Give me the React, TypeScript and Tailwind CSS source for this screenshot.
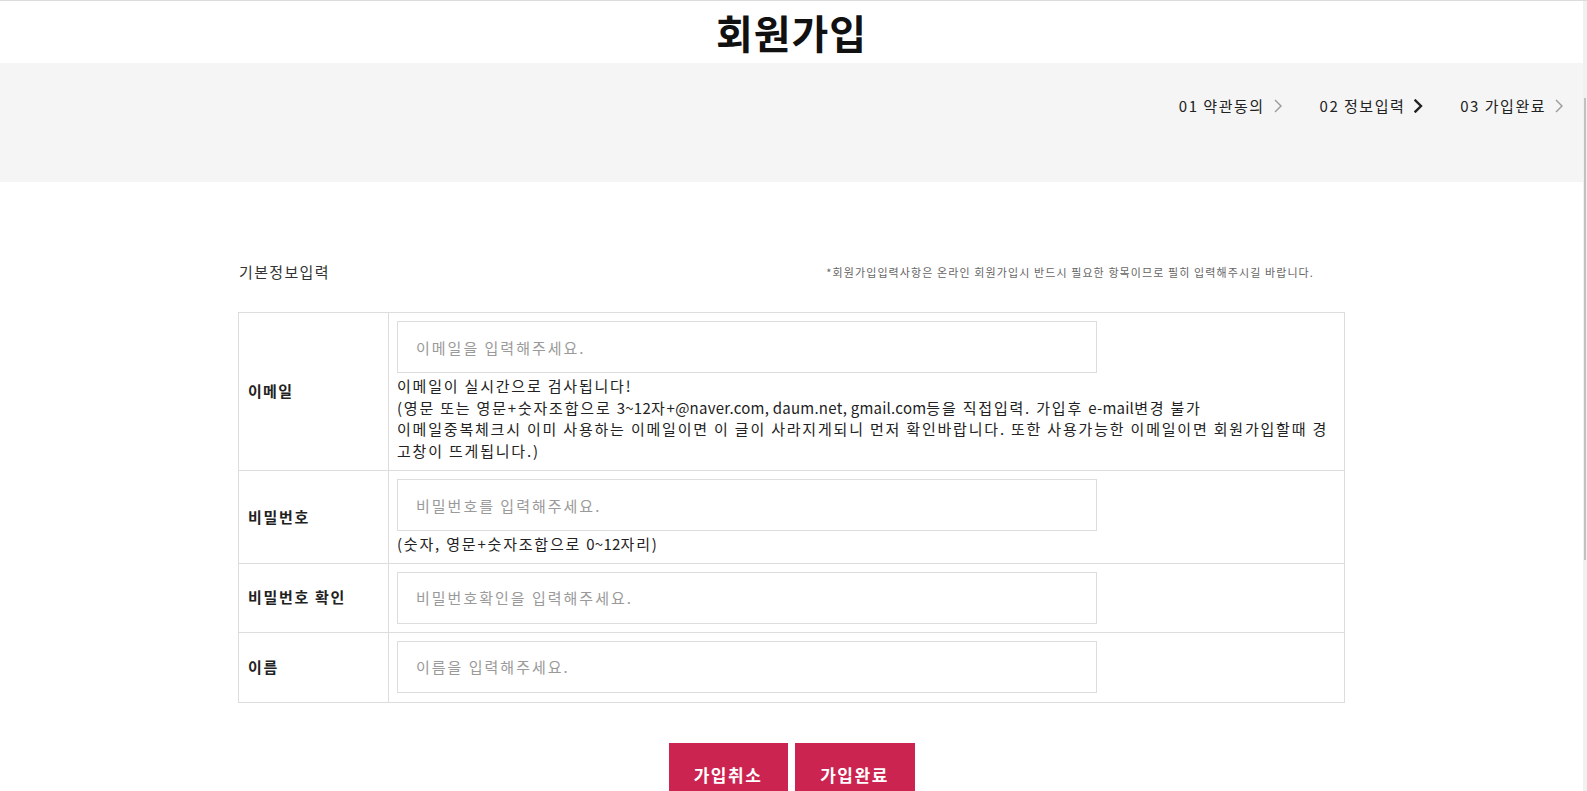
import React from "react";

const FONT = { fontFamily: '"Noto Sans CJK KR", "Noto Sans", sans-serif' };

function L({ children }: { children: React.ReactNode }) {
  return <span className="tracking-[0.25px]">{children}</span>;
}

function Chevron({ dark }: { dark?: boolean }) {
  return (
    <svg width="9" height="14" viewBox="0 0 9 14" className="ml-[9px]">
      <polyline
        points="1.5,1.5 7,7 1.5,12.5"
        fill="none"
        stroke={dark ? "#222" : "#9a9a9a"}
        strokeWidth={dark ? 2.4 : 1.4}
        strokeLinecap="square"
      />
    </svg>
  );
}

function Step({ label, dark }: { label: string; dark?: boolean }) {
  return (
    <div className="flex items-center">
      <span className="text-[15px] leading-[22px] tracking-[1.5px] text-[#222]">{label}</span>
      <Chevron dark={dark} />
    </div>
  );
}

function Field({ placeholder }: { placeholder: string }) {
  return (
    <input
      type="text"
      placeholder={placeholder}
      className="block w-[700px] h-[52px] border border-[#dddddd] px-[18px] text-[15px] tracking-[2px] text-[#222] placeholder:text-[#9a9a9a] outline-none bg-white"
      style={FONT}
    />
  );
}

export default function App() {
  return (
    <div className="h-[791px] overflow-hidden border-t border-[#dcdcdc] bg-white flex" style={FONT}>
      <div className="flex-1 min-w-0">
        <header className="h-[62px] flex items-center justify-center">
          <h1 className="text-[40px] font-bold tracking-[1px] text-[#111] leading-none">회원가입</h1>
        </header>

        <div className="h-[119px] bg-[#f5f5f5] pt-[32px] pr-[19px] flex justify-end items-start gap-[37px]">
          <Step label="01 약관동의" />
          <Step label="02 정보입력" dark />
          <Step label="03 가입완료" />
        </div>

        <div className="w-[1107px] mx-auto mt-[79px]">
          <div className="flex items-center justify-between pr-[31px] mb-[29px]">
            <span className="text-[15px] leading-[22px] tracking-[1.35px] text-[#333] pl-[1px]">기본정보입력</span>
            <span className="text-[11px] tracking-[1.1px] text-[#666] leading-[16px]">
              *회원가입입력사항은 온라인 회원가입시 반드시 필요한 항목이므로 필히 입력해주시길 바랍니다.
            </span>
          </div>

          <table className="w-full border-collapse">
            <tbody>
              <tr>
                <th className="w-[150px] border border-[#dddddd] px-[9px] text-left text-[15px] font-bold tracking-[1.3px] text-[#222]">
                  이메일
                </th>
                <td className="border border-[#dddddd] px-[8px] pt-[8px] pb-[9px]">
                  <Field placeholder="이메일을 입력해주세요." />
                  <div className="mt-[2px] text-[15px] leading-[21.5px] tracking-[1.8px] text-[#222] whitespace-nowrap">
                    <div>이메일이 실시간으로 검사됩니다!</div>
                    <div>
                      (영문 또는 영문+숫자조합으로 <L>3~12</L>자<L>+@naver.com, daum.net, gmail.com</L>등을 직접입력. 가입후 <L>e-mail</L>변경 불가
                    </div>
                    <div>이메일중복체크시 이미 사용하는 이메일이면 이 글이 사라지게되니 먼저 확인바랍니다. 또한 사용가능한 이메일이면 회원가입할때 경</div>
                    <div>고창이 뜨게됩니다.)</div>
                  </div>
                </td>
              </tr>
              <tr>
                <th className="border border-[#dddddd] px-[9px] text-left text-[15px] font-bold tracking-[1.7px] text-[#222]">
                  비밀번호
                </th>
                <td className="border border-[#dddddd] px-[8px] pt-[8px] pb-[8px]">
                  <Field placeholder="비밀번호를 입력해주세요." />
                  <p className="mt-[2px] text-[15px] leading-[21.5px] tracking-[1.8px] text-[#222]">
                    (숫자, 영문+숫자조합으로 <L>0~12</L>자리)
                  </p>
                </td>
              </tr>
              <tr>
                <th className="border border-[#dddddd] px-[9px] text-left text-[15px] font-bold tracking-[1.7px] text-[#222]">
                  비밀번호 확인
                </th>
                <td className="border border-[#dddddd] px-[8px] py-[8px]">
                  <Field placeholder="비밀번호확인을 입력해주세요." />
                </td>
              </tr>
              <tr>
                <th className="border border-[#dddddd] px-[9px] text-left text-[15px] font-bold tracking-[1.7px] text-[#222]">
                  이름
                </th>
                <td className="border border-[#dddddd] px-[8px] pt-[8px] pb-[9px]">
                  <Field placeholder="이름을 입력해주세요." />
                </td>
              </tr>
            </tbody>
          </table>

          <div className="mt-[40px] flex justify-center gap-[7px]">
            <button className="w-[119px] h-[64px] bg-[#cc2451] text-white text-[17px] font-bold tracking-[1.5px]">
              가입취소
            </button>
            <button className="w-[120px] h-[64px] bg-[#cc2451] text-white text-[17px] font-bold tracking-[1.5px]">
              가입완료
            </button>
          </div>
        </div>
      </div>

      <div className="w-[4px] shrink-0 bg-[#f1f1f1] flex justify-center">
        <div className="w-[2px] h-[462px] mt-[97px] bg-[#c1c1c1]" />
      </div>
    </div>
  );
}
